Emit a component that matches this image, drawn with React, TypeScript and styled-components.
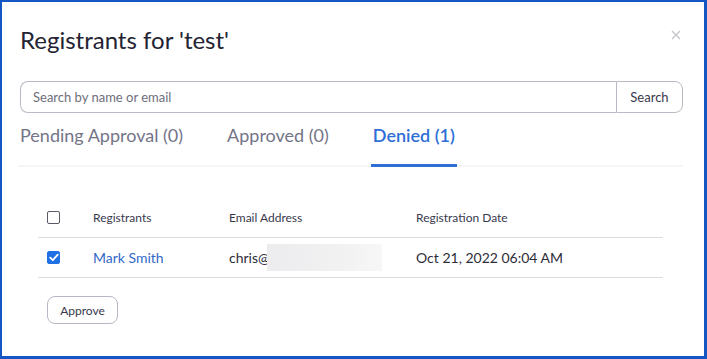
import React from "react";
import styled, { createGlobalStyle } from "styled-components";

const Global = createGlobalStyle`
  html, body { margin: 0; padding: 0; background: #ffffff; }
  body { font-family: Lato, "Open Sans", Arial, sans-serif; }
  * { box-sizing: border-box; }
`;

const Dialog = styled.div`
  width: 707px;
  height: 359px;
  background: #ffffff;
  border-style: solid;
  border-color: #1557c2;
  border-width: 2px 3px 3px 2px;
  padding: 0 21px 0 18px;
  display: flex;
  flex-direction: column;
`;

const Header = styled.div`
  display: flex;
  align-items: center;
  justify-content: space-between;
  height: 40px;
  margin-top: 17px;
`;

const Title = styled.h1`
  margin: 0;
  font-size: 24px;
  font-weight: 400;
  color: #232333;
  line-height: 29px;
`;

const Close = styled.button`
  border: none;
  background: none;
  padding: 0;
  margin: 0 0 8px 0;
  width: 14px;
  height: 14px;
  display: flex;
  align-items: center;
  justify-content: center;
  cursor: pointer;
`;

const SearchRow = styled.div`
  display: flex;
  height: 32px;
  margin-top: 22px;
`;

const SearchInput = styled.input`
  flex: 1;
  height: 32px;
  border: 1px solid #babac4;
  border-right: none;
  border-radius: 8px 0 0 8px;
  padding: 0 12px;
  font-family: Lato, Arial, sans-serif;
  font-size: 13px;
  color: #232333;
  outline: none;
  &::placeholder { color: #6e6e7a; }
`;

const SearchButton = styled.button`
  width: 67px;
  height: 32px;
  border: 1px solid #babac4;
  border-radius: 0 8px 8px 0;
  background: #ffffff;
  font-family: Lato, Arial, sans-serif;
  font-size: 13px;
  color: #39394d;
  padding: 0;
`;

const TabList = styled.div`
  display: flex;
  gap: 40px;
  margin-left: -2px;
  border-bottom: 2px solid #f4f5f7;
`;

const Tab = styled.div<{ $active?: boolean }>`
  padding: 11px 2px 18px;
  margin-bottom: -2px;
  font-size: 18px;
  line-height: 22px;
  color: ${(p) => (p.$active ? "#2e6fd6" : "#747487")};
  font-weight: ${(p) => (p.$active ? 600 : 400)};
  border-bottom: 3px solid ${(p) => (p.$active ? "#2e6fd6" : "transparent")};
`;

const Table = styled.div`
  margin: 31px 20px 0 18px;
`;

const Row = styled.div<{ $head?: boolean }>`
  display: grid;
  grid-template-columns: 55px 136px 187px 1fr;
  align-items: center;
  height: 40px;
  border-bottom: 1px solid #dcdce0;
  font-size: ${(p) => (p.$head ? "12px" : "14px")};
  color: ${(p) => (p.$head ? "#39394d" : "#2d2d3a")};
`;

const CheckCell = styled.div`
  padding-left: 9px;
  display: flex;
  align-items: center;
`;

const Box = styled.span<{ $checked?: boolean }>`
  width: 13px;
  height: 13px;
  border-radius: 2px;
  border: 1px solid ${(p) => (p.$checked ? "#1f6fe5" : "#5a5a66")};
  background: ${(p) => (p.$checked ? "#1f6fe5" : "#ffffff")};
  display: flex;
  align-items: center;
  justify-content: center;
`;

const Name = styled.a`
  color: #3268c8;
  text-decoration: none;
`;

const Email = styled.div`
  display: flex;
  align-items: center;
`;

const Redacted = styled.span`
  display: inline-block;
  width: 115px;
  height: 27px;
  margin-left: -3px;
  background: linear-gradient(90deg, #ececee 0%, #f2f2f3 70%, #f7f7f8 100%);
`;

const Approve = styled.button`
  align-self: flex-start;
  margin: 18px 0 0 27px;
  width: 71px;
  height: 28px;
  border: 1px solid #b8b8c6;
  border-radius: 8px;
  background: #ffffff;
  font-family: Lato, Arial, sans-serif;
  font-size: 12px;
  color: #39394d;
  padding: 0;
`;

const Check = () => (
  <svg width="10" height="9" viewBox="0 0 10 9">
    <path d="M1.2 4.6 L3.8 7.2 L8.8 1.6" fill="none" stroke="#fff" strokeWidth="1.8" strokeLinecap="round" strokeLinejoin="round" />
  </svg>
);

export default function App() {
  return (
    <>
      <Global />
      <Dialog>
        <Header>
          <Title>Registrants for 'test'</Title>
          <Close aria-label="Close">
            <svg width="10" height="10" viewBox="0 0 10 10">
              <path d="M1 1 L9 9 M9 1 L1 9" stroke="#c4c4c8" strokeWidth="1.3" />
            </svg>
          </Close>
        </Header>
        <SearchRow>
          <SearchInput placeholder="Search by name or email" />
          <SearchButton>Search</SearchButton>
        </SearchRow>
        <TabList>
          <Tab>Pending Approval (0)</Tab>
          <Tab>Approved (0)</Tab>
          <Tab $active>Denied (1)</Tab>
        </TabList>
        <Table>
          <Row $head>
            <CheckCell><Box /></CheckCell>
            <div>Registrants</div>
            <div>Email Address</div>
            <div>Registration Date</div>
          </Row>
          <Row>
            <CheckCell><Box $checked><Check /></Box></CheckCell>
            <div><Name href="#">Mark Smith</Name></div>
            <Email>chris@<Redacted /></Email>
            <div>Oct 21, 2022 06:04 AM</div>
          </Row>
        </Table>
        <Approve>Approve</Approve>
      </Dialog>
    </>
  );
}
